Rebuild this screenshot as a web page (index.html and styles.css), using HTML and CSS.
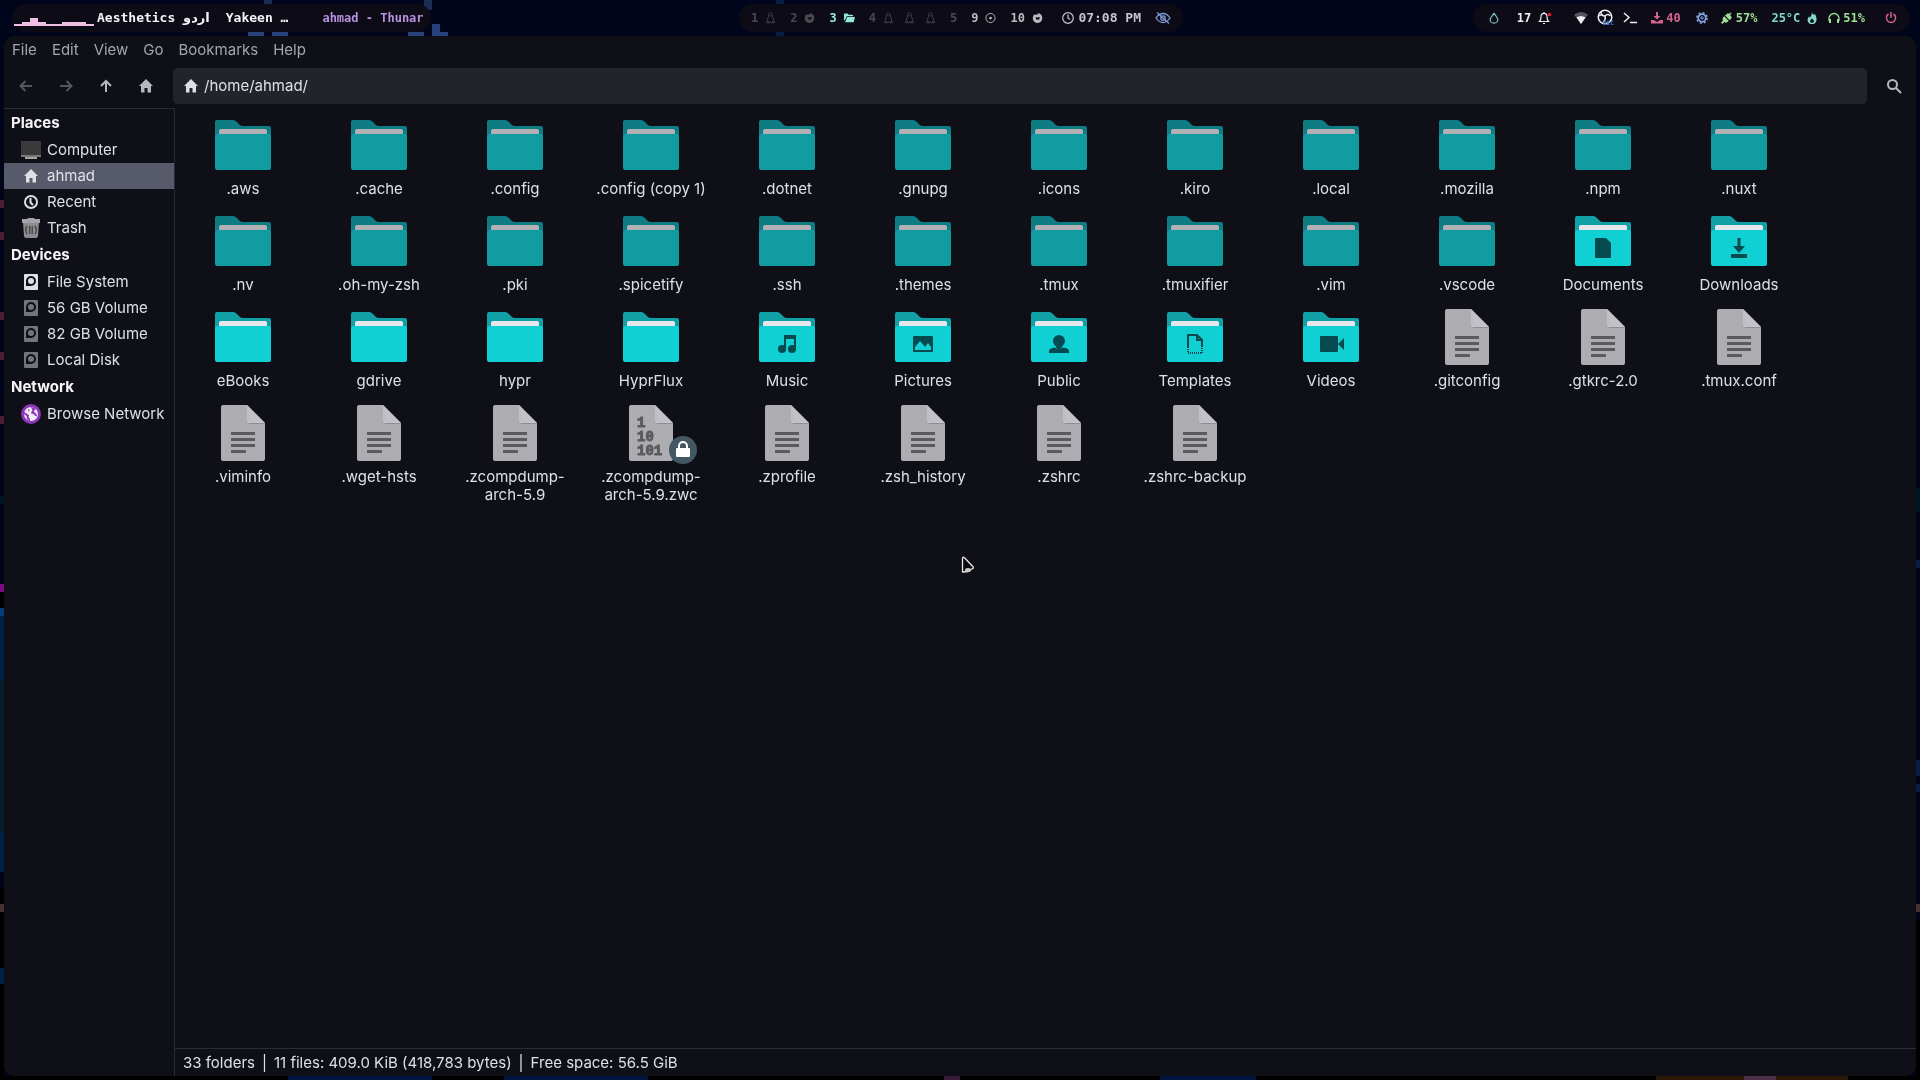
FILE: index.html
```html
<!DOCTYPE html>
<html lang="en">
<head>
  <meta charset="UTF-8">
  <meta name="viewport" content="width=device-width, initial-scale=1.0">
  <title>ahmad - Thunar</title>
  <link rel="stylesheet" href="styles.css">
</head>
<body>
  <!-- Shared icons -->
  <svg class="sprite" aria-hidden="true">
    <symbol id="folder" viewBox="0 0 64 64">
      <path fill="#10a0a5" d="M6 7h16q2 0 4 2l3 3q1 1 3 1h26q2 0 2 2v20H4V9q0-2 2-2z"/>
      <path fill="#e6e7ea" d="M10 16h44q2 0 2 2v8H8v-8q0-2 2-2z"/>
      <rect x="4" y="21" width="56" height="36" rx="2" fill="#10d0d3"/>
    </symbol>
    <symbol id="folder-dim" viewBox="0 0 64 64">
      <path fill="#0e7c82" d="M6 7h16q2 0 4 2l3 3q1 1 3 1h26q2 0 2 2v20H4V9q0-2 2-2z"/>
      <path fill="#b0b0b4" d="M10 16h44q2 0 2 2v8H8v-8q0-2 2-2z"/>
      <rect x="4" y="21" width="56" height="36" rx="2" fill="#119ca1"/>
    </symbol>
    <symbol id="page" viewBox="0 0 64 64">
      <path fill="#adadb1" d="M12 4h24l18 18v36q0 2-2 2H12q-2 0-2-2V6q0-2 2-2z"/>
      <path fill="#8f8f94" d="M38 22h16v1H38z"/>
      <path fill="#c1c1c7" d="M36 4l18 18H38q-2 0-2-2z"/>
    </symbol>
    <symbol id="file" viewBox="0 0 64 64">
      <use href="#page"/>
      <path fill="#5b5b5d" d="M20 31h24v3H20zM20 37h24v3H20zM20 43h24v3H20zM20 49h15v3H20z"/>
    </symbol>
    <symbol id="home" viewBox="0 0 16 16">
      <path d="M8 1l7 7h-2v6.5H9.5V10h-3v4.500H3V8H1z"/>
    </symbol>
    <symbol id="disk" viewBox="0 0 20 20">
      <path fill-rule="evenodd" d="M4 2h12q1 0 1 1v14q0 1-1 1H4q-1 0-1-1V3q0-1 1-1zM10 4a5 5 0 0 0-5 5v5h5a5 5 0 0 0 0-10z"/>
      <circle cx="10" cy="9" r="3"/>
    </symbol>
    <symbol id="tux" viewBox="0 0 12 14">
      <path fill="none" stroke="currentColor" d="M6 1c-1.500 0-2 1-2 2.500C4 5.500 2.500 7 2.500 10M6 1c1.500 0 2 1 2 2.500 0 2 1.500 3.500 1.500 6.500M1 12l1.500-2L5 12.500H1.500zM11 12l-1.500-2L7 12.500h3.500zM5 12h2M5 4.500h2"/>
    </symbol>
    <symbol id="firefox" viewBox="0 0 12 12">
      <path fill-rule="evenodd" d="M2.500 2l1 .8Q5 1.800 7 2L6 .8Q11 1 11.200 6A5.200 5.200 0 0 1 .8 6.500Q.8 3.500 2.500 2zM4.200 4.500Q3.500 7.500 6.200 8 8.500 8 8.600 5.800 8 4.800 6.800 4.900 6.200 6 5.200 5.500z"/>
    </symbol>
  </svg>

  <!-- Wallpaper visible around the window -->
  <svg class="wallpaper" viewBox="0 0 1920 1080" preserveAspectRatio="none" aria-hidden="true">
    <path fill="#1b2d55" d="M264 0h8v4h-8zM424 0h8v10h-8z"/>
    <path fill="#25437a" d="M248 32h16v4h-16zM272 32h16v4h-16zM408 32h16v4h-16zM432 24h8v8h8v4h-16z"/>
    <path fill="#071f48" d="M776 0h8v36h-8zM1916 560h4v8h-4zM1916 760h4v16h-4zM1916 784h4v8h-4z"/>
    <path fill="#4a1e2e" d="M0 200h4v8H0zM0 232h4v8H0zM0 312h4v8H0zM0 352h4v8H0zM0 416h4v8H0z"/>
    <path fill="#001528" d="M0 496h4v8H0zM1916 488h4v24h-4z"/>
    <path fill="#7a0a80" d="M0 584h4v8H0z"/>
    <path fill="#000" d="M0 592h4v16H0zM0 888h4v192H0zM1916 920h4v160h-4zM0 1076h1920v4H0z"/>
    <path fill="#063a78" d="M0 608h4v8H0z"/>
    <path fill="#002048" d="M0 616h4v64H0zM0 832h4v40H0zM0 968h4v16H0z"/>
    <path fill="#0a1c30" d="M0 680h4v152H0z"/>
    <path fill="#463030" d="M0 904h4v8H0zM1916 904h4v8h-4z"/>
    <path fill="#001540" d="M288 1076h144v4H288zM504 1076h144v4H504zM1160 1076h96v4h-96z"/>
    <path fill="#3a1a38" d="M944 1076h16v4h-16z"/>
    <path fill="#2a1805" d="M1656 1076h192v4h-192z"/>
    <path fill="#4a3048" d="M1744 1076h32v4h-32z"/>
  </svg>

  <div class="desktop">
    <header class="bar">
      <div class="pill pill-left">
        <svg class="cava" viewBox="0 0 80 28"><path fill="#f0bfe4" d="M0 20h8v-2h8v-4h8v4h8v2h16v-2h24v2h8v2H0z"/></svg>
        <span class="song">Aesthetics <span class="urdu" lang="ur">اردو</span></span>
        <span class="song artist">Yakeen …</span>
        <span class="window-title">ahmad - Thunar</span>
      </div>

      <nav class="pill pill-center" aria-label="Workspaces">
        <div class="workspaces">
          <button class="ws">1 <svg><use href="#tux"/></svg></button>
          <button class="ws">2 <svg><use href="#firefox"/></svg></button>
          <button class="ws active">3 <svg viewBox="0 0 12 12"><path d="M0 2q0-1 1-1h3l1 1.500h4q1 0 1 1V4H3L1 8.500H0zM3.500 5H12l-1.500 5.500H1.200z"/></svg></button>
          <button class="ws">4 <svg><use href="#tux"/></svg><svg><use href="#tux"/></svg><svg><use href="#tux"/></svg></button>
          <button class="ws">5</button>
          <button class="ws used">9 <svg viewBox="0 0 12 12"><circle cx="6" cy="6" r="5" fill="none" stroke="currentColor"/><circle cx="6" cy="6" r="1.500"/></svg></button>
          <button class="ws used">10 <svg><use href="#firefox"/></svg></button>
        </div>
        <span class="clock">
          <svg viewBox="0 0 12 12" fill="none" stroke="currentColor" stroke-width="1.200"><circle cx="6" cy="6" r="5.300"/><path d="M6 2.500V6l2 1.500"/></svg>
          07:08 PM
        </span>
        <button class="eye" aria-label="Idle inhibitor">
          <svg viewBox="0 0 16 12" fill="none" stroke="currentColor" stroke-width="1.300"><path d="M1 6q3-4.500 7-4.500T15 6q-3 4.500-7 4.500T1 6z"/><circle cx="8" cy="6" r="2.200"/><path d="M2 .5l12 11"/></svg>
        </button>
      </nav>

      <div class="pill pill-right">
        <svg class="mod teal" viewBox="0 0 12 14" fill="none" stroke="currentColor" stroke-width="1.300"><path d="M6 1.500Q1.500 7 1.500 9a4.500 4 0 0 0 9 0Q10.500 7 6 1.500z"/></svg>
        <span class="mod updates">17
          <svg viewBox="0 0 14 14"><path fill="none" stroke="currentColor" stroke-width="1.200" d="M1.500 10.500q1.500-1.500 1.500-5A3 3 0 0 1 6 2.300a3 3 0 0 1 3 3.200q0 3.500 1.500 5zM5 12.500h2M6 1v1"/><circle cx="11.500" cy="3.500" r="1.800" fill="#f01c2c"/></svg>
        </span>
        <svg class="mod wifi" viewBox="0 0 16 14"><path fill="#54545c" d="M1 3.500q7-5 14 0L8 13z"/><path d="M3.500 6.500q4.500-3 9 0L8 13z"/></svg>
        <svg class="mod rec" viewBox="0 0 18 18">
          <circle cx="8" cy="8" r="6.800" fill="none" stroke="currentColor" stroke-width="1.500"/>
          <path fill="none" stroke="currentColor" stroke-width="1.500" d="M4 3q0 4 4 4 3-3 5.500 0M8 7q1 4-2 6M2 7q2-2 4-1"/>
          <text x="6" y="16">REC</text>
        </svg>
        <svg class="mod terminal" viewBox="0 0 14 12" fill="none" stroke="currentColor" stroke-width="1.500"><path d="M1 1l5 4.500L1 10M7 10.500h7"/></svg>
        <span class="mod pink download"><svg viewBox="0 0 12 12"><path d="M5 0h2v4h2.500L6 7.500 2.500 4H5zM0 8h3l3 2 3-2h3v3.500H0z"/></svg>40</span>
        <svg class="mod blue gear" viewBox="0 0 12 12" fill="none" stroke="currentColor"><circle cx="6" cy="6" r="3.800" stroke-width="1.800"/><circle cx="6" cy="6" r="5.200" stroke-width="1.500" stroke-dasharray="2 2.080"/><circle cx="6" cy="6" r="1.200"/></svg>
        <span class="mod green battery"><svg viewBox="0 0 12 12"><path d="M6 2l1-1 1 1L9.500.5l1 1L9 3l1 1q1.500 1.500 0 3L8.500 8 4 3.500 5 2.500zM3.200 4.300l4.500 4.500L6.500 10Q5 11 3.500 10L1.200 12 0 10.800 2 8.500Q1 7 2 5.500z"/></svg>57%</span>
        <span class="mod teal temp">25°C<svg viewBox="0 0 12 12"><path fill-rule="evenodd" d="M6 0q0 2 2 3l.7-1.200Q11 5 10.500 8A4.500 4.200 0 0 1 1.500 8Q1.500 6 3.300 4.300L4 6Q6 3 6 0zM6 6.500Q4 8 4 9.200a2 1.600 0 0 0 4 0Q8 8 6 6.500z"/></svg></span>
        <span class="mod green volume"><svg viewBox="0 0 12 12" fill="none" stroke="currentColor"><path stroke-width="1.300" d="M1 9V6.500a5 5 0 0 1 10 0V9"/><path stroke-width="2" d="M2 7v4M10 7v4"/></svg>51%</span>
        <button class="mod pink power" aria-label="Power"><svg viewBox="0 0 12 12" fill="none" stroke="currentColor" stroke-width="1.500"><path d="M3.500 2a4.600 4.600 0 1 0 5 0M6 0v6"/></svg></button>
      </div>
    </header>

    <div class="window">
      <nav class="menubar" aria-label="Menu">
        <button>File</button>
        <button>Edit</button>
        <button>View</button>
        <button>Go</button>
        <button>Bookmarks</button>
        <button>Help</button>
      </nav>

      <div class="toolbar">
        <div class="nav-buttons">
          <button disabled aria-label="Back"><svg viewBox="0 0 16 16"><path class="line" d="M14 8H3M7.500 3L2.500 8l5 5"/></svg></button>
          <button disabled aria-label="Forward"><svg viewBox="0 0 16 16"><path class="line" d="M2 8h11M8.500 3l5 5-5 5"/></svg></button>
          <button aria-label="Up"><svg viewBox="0 0 16 16"><path class="line" d="M8 14V3M3 8l5-5 5 5"/></svg></button>
          <button aria-label="Home"><svg><use href="#home"/></svg></button>
        </div>
        <label class="pathbar">
          <svg><use href="#home"/></svg>
          <input type="text" value="/home/ahmad/" aria-label="Location">
        </label>
        <button class="search" aria-label="Search"><svg viewBox="0 0 16 16"><path class="line" d="M10 10l5 5"/><circle class="line" cx="6.500" cy="6.500" r="4.500"/></svg></button>
      </div>

      <div class="content">
        <aside class="sidebar">
          <h2>Places</h2>
          <a href="#"><svg viewBox="0 0 20 20"><path fill="#3a3a3c" d="M0 1h20v14H0z"/><path fill="#77777a" d="M0 15h20v2H0z"/><path fill="#a5a5a8" d="M4 17h12v2H4z"/></svg>Computer</a>
          <a href="#" class="selected"><svg viewBox="-2 -2 20 20"><use href="#home" width="16" height="16"/></svg>ahmad</a>
          <a href="#"><svg viewBox="0 0 20 20" fill="none" stroke="currentColor" stroke-width="2"><circle cx="10" cy="10" r="6"/><path d="M9.500 6v4.500L12 13"/></svg>Recent</a>
          <a href="#"><svg viewBox="0 0 20 20"><path fill="#8c8c8f" d="M2 4h16l-1 14q-.3 2-2 2H5q-1.700 0-2-2z"/><path fill="#a4a4a8" d="M1 1h5l1-1h6l1 1h5v4H1z"/><path fill="none" stroke="#4a4a4e" stroke-width="1.500" d="M6 8q-2.500 4 0 8M8.700 8v8M11.300 8v8M14 8q2.500 4 0 8"/></svg>Trash</a>
          <h2>Devices</h2>
          <a href="#"><svg><use href="#disk"/></svg>File System</a>
          <a href="#" class="unmounted"><svg><use href="#disk"/></svg>56 GB Volume</a>
          <a href="#" class="unmounted"><svg><use href="#disk"/></svg>82 GB Volume</a>
          <a href="#" class="unmounted"><svg><use href="#disk"/></svg>Local Disk</a>
          <h2>Network</h2>
          <a href="#"><svg viewBox="0 0 20 20"><circle cx="10" cy="10" r="10" fill="#8b35b8"/><circle cx="10" cy="10" r="7" fill="#f4eef8"/><path fill="#8b35b8" d="M3 8l2.500 1.500L8 11l-.5 2 1.500 2v2.500L6 15l-.5-3L3 10zM9.500 3l3 .5L15 5l-1.500 1-.5 2 2 1.500 1.500 3-2-.5-2-2-2.500-.5.5-2 1-1.500zM7 5l2 1-1.500 1.500z"/></svg>Browse Network</a>
        </aside>

        <div class="main">
          <div class="files">
            <a class="item" href="#"><svg><use href="#folder-dim"/></svg><span>.aws</span></a>
            <a class="item" href="#"><svg><use href="#folder-dim"/></svg><span>.cache</span></a>
            <a class="item" href="#"><svg><use href="#folder-dim"/></svg><span>.config</span></a>
            <a class="item" href="#"><svg><use href="#folder-dim"/></svg><span>.config (copy 1)</span></a>
            <a class="item" href="#"><svg><use href="#folder-dim"/></svg><span>.dotnet</span></a>
            <a class="item" href="#"><svg><use href="#folder-dim"/></svg><span>.gnupg</span></a>
            <a class="item" href="#"><svg><use href="#folder-dim"/></svg><span>.icons</span></a>
            <a class="item" href="#"><svg><use href="#folder-dim"/></svg><span>.kiro</span></a>
            <a class="item" href="#"><svg><use href="#folder-dim"/></svg><span>.local</span></a>
            <a class="item" href="#"><svg><use href="#folder-dim"/></svg><span>.mozilla</span></a>
            <a class="item" href="#"><svg><use href="#folder-dim"/></svg><span>.npm</span></a>
            <a class="item" href="#"><svg><use href="#folder-dim"/></svg><span>.nuxt</span></a>
            <a class="item" href="#"><svg><use href="#folder-dim"/></svg><span>.nv</span></a>
            <a class="item" href="#"><svg><use href="#folder-dim"/></svg><span>.oh-my-zsh</span></a>
            <a class="item" href="#"><svg><use href="#folder-dim"/></svg><span>.pki</span></a>
            <a class="item" href="#"><svg><use href="#folder-dim"/></svg><span>.spicetify</span></a>
            <a class="item" href="#"><svg><use href="#folder-dim"/></svg><span>.ssh</span></a>
            <a class="item" href="#"><svg><use href="#folder-dim"/></svg><span>.themes</span></a>
            <a class="item" href="#"><svg><use href="#folder-dim"/></svg><span>.tmux</span></a>
            <a class="item" href="#"><svg><use href="#folder-dim"/></svg><span>.tmuxifier</span></a>
            <a class="item" href="#"><svg><use href="#folder-dim"/></svg><span>.vim</span></a>
            <a class="item" href="#"><svg><use href="#folder-dim"/></svg><span>.vscode</span></a>
            <a class="item" href="#"><svg viewBox="0 0 64 64"><use href="#folder"/><path class="emblem" d="M25 29h10l5 5v14q0 1-1 1H25q-1 0-1-1V30q0-1 1-1z"/></svg><span>Documents</span></a>
            <a class="item" href="#"><svg viewBox="0 0 64 64"><use href="#folder"/><path class="emblem" d="M30.500 29h3v8H38l-6 7-6-7h4.500zM24 45h16v4H24z"/></svg><span>Downloads</span></a>
            <a class="item" href="#"><svg><use href="#folder"/></svg><span>eBooks</span></a>
            <a class="item" href="#"><svg><use href="#folder"/></svg><span>gdrive</span></a>
            <a class="item" href="#"><svg><use href="#folder"/></svg><span>hypr</span></a>
            <a class="item" href="#"><svg><use href="#folder"/></svg><span>HyprFlux</span></a>
            <a class="item" href="#"><svg viewBox="0 0 64 64"><use href="#folder"/><path class="emblem" d="M29 30h12v14h-2V34h-8v10h-2z"/><circle class="emblem" cx="27" cy="44" r="4"/><circle class="emblem" cx="37" cy="44" r="4"/></svg><span>Music</span></a>
            <a class="item" href="#"><svg viewBox="0 0 64 64"><use href="#folder"/><path class="emblem" fill-rule="evenodd" d="M23 31h18q1 0 1 1v14q0 1-1 1H23q-1 0-1-1V32q0-1 1-1zM24 45h16v-3l-3-4-3 4-5-6-5 6z"/></svg><span>Pictures</span></a>
            <a class="item" href="#"><svg viewBox="0 0 64 64"><use href="#folder"/><ellipse class="emblem" cx="32" cy="36" rx="6" ry="6"/><path class="emblem" d="M29 40h6v2.500l-3 2-3-2zM22 48v-2q0-3 6-3.500 4 3 8 0 6 .5 6 3.500v2z"/></svg><span>Public</span></a>
            <a class="item" href="#"><svg viewBox="0 0 64 64"><use href="#folder"/><path fill="none" stroke="#044a4e" stroke-width="2" d="M25 42V30h9l5 5v7M34 30v5h5"/><path fill="none" stroke="#044a4e" stroke-width="2" stroke-dasharray="1 1" d="M25 42v6h14v-6"/></svg><span>Templates</span></a>
            <a class="item" href="#"><svg viewBox="0 0 64 64"><use href="#folder"/><path class="emblem" d="M22 31h16q1 0 1 1v14q0 1-1 1H22q-1 0-1-1V32q0-1 1-1zM39 39l6-6v12z"/></svg><span>Videos</span></a>
            <a class="item" href="#"><svg><use href="#file"/></svg><span>.gitconfig</span></a>
            <a class="item" href="#"><svg><use href="#file"/></svg><span>.gtkrc-2.0</span></a>
            <a class="item" href="#"><svg><use href="#file"/></svg><span>.tmux.conf</span></a>
            <a class="item" href="#"><svg><use href="#file"/></svg><span>.viminfo</span></a>
            <a class="item" href="#"><svg><use href="#file"/></svg><span>.wget-hsts</span></a>
            <a class="item" href="#"><svg><use href="#file"/></svg><span>.zcompdump-arch-5.9</span></a>
            <a class="item" href="#">
              <svg viewBox="0 0 64 64">
                <use href="#page"/>
                <g class="binary"><text x="18" y="26">1</text><text x="18" y="40">10</text><text x="18" y="54">101</text></g>
                <circle cx="64" cy="49" r="14" fill="#435862"/>
                <path fill="none" stroke="#fff" stroke-width="2" d="M60 48v-3a4 4 0 0 1 8 0v3"/>
                <rect x="57" y="47" width="14" height="9" rx="1" fill="#fff"/>
              </svg>
              <span>.zcompdump-arch-5.9.zwc</span>
            </a>
            <a class="item" href="#"><svg><use href="#file"/></svg><span>.zprofile</span></a>
            <a class="item" href="#"><svg><use href="#file"/></svg><span>.zsh_history</span></a>
            <a class="item" href="#"><svg><use href="#file"/></svg><span>.zshrc</span></a>
            <a class="item" href="#"><svg><use href="#file"/></svg><span>.zshrc-backup</span></a>
          </div>
          <footer class="statusbar">
            <span>33 folders</span><span>|</span><span>11 files: 409.0 KiB (418,783 bytes)</span><span>|</span><span>Free space: 56.5 GiB</span>
          </footer>
        </div>
      </div>
    </div>
  </div>

  <svg class="cursor" viewBox="0 0 14 18" aria-hidden="true">
    <path fill="#0c0c0c" stroke="#eee3e6" stroke-width="1.300" stroke-linejoin="round" d="M1.500 2.500q.3-2 2-.8l8.500 9q1 1.500-.8 2L7 15.500l-5.500.5z"/>
    <ellipse cx="7" cy="14" rx="3" ry="2" fill="#c9cbc4"/>
  </svg>
</body>
</html>
```
FILE: styles.css
```css
* {
  box-sizing: border-box;
}

body {
  margin: 0;
  background-color: #01051c;
  color: #dfe0e6;
  font-family: Inter, "Noto Sans", sans-serif;
  font-size: 15px;
  line-height: 18px;
}

button {
  padding: 0;
  border: none;
  background: none;
  color: inherit;
  font: inherit;
}

a {
  color: inherit;
  text-decoration: none;
}

svg {
  flex: none;
  fill: currentColor;
}

svg[fill="none"] {
  fill: none;
}

.sprite {
  position: absolute;
  width: 0;
  height: 0;
}

.wallpaper {
  position: fixed;
  inset: 0;
  width: 100%;
  height: 100%;
  z-index: -1;
}

.desktop {
  display: flex;
  flex-direction: column;
  height: 100vh;
  padding: 4px;
}

/* Status bar on top */
.bar {
  display: grid;
  grid-template-columns: 1fr auto 1fr;
  margin-bottom: 4px;
  padding: 0 6px 0 8px;
  font-family: "DejaVu Sans Mono", monospace;
  font-size: 12px;
  font-weight: bold;
}

.pill {
  display: flex;
  align-items: center;
  height: 28px;
  border-radius: 14px;
  background-color: #0d0b15;
  white-space: nowrap;
}

.pill-left {
  justify-self: start;
  padding: 0 7px 0 2px;
}

.cava {
  width: 80px;
  height: 28px;
}

.song {
  margin-left: 3px;
  color: #f3f3f6;
  font-size: 13px;
}

.urdu {
  font-family: "DejaVu Sans", sans-serif;
}

.artist {
  margin-left: 16px;
}

.window-title {
  margin-left: 34px;
  color: #b892e0;
}

.pill-center {
  width: 444px;
  padding: 0 12px;
}

.workspaces {
  display: flex;
  gap: 14px;
}

.ws {
  display: flex;
  align-items: center;
  gap: 7px;
  color: #4b4a52;
}

.ws svg {
  width: 11px;
  height: 12px;
}

.ws svg + svg {
  margin-left: 3px;
}

.ws.active {
  color: #94e8d6;
}

.ws.used {
  color: #b9b9bf;
}

.clock {
  display: flex;
  align-items: center;
  gap: 4px;
  margin-left: auto;
  color: #c3c6d2;
  font-size: 13px;
}

.clock svg {
  width: 12px;
  height: 12px;
}

.eye {
  display: flex;
  margin-left: 14px;
  color: #7f9bd8;
}

.eye svg {
  width: 16px;
  height: 12px;
}

.pill-right {
  justify-self: end;
  padding: 0 13px 0 15px;
}

.mod {
  display: flex;
  align-items: center;
  gap: 3px;
  height: 14px;
  color: #eeeef2;
}

.mod svg {
  width: 12px;
  height: 12px;
}

svg.mod {
  width: 12px;
  height: 12px;
}

.mod.teal {
  color: #82d8cb;
}

.mod.pink {
  color: #d2638f;
}

.mod.blue {
  color: #85a4e4;
}

.mod.green {
  color: #9ede94;
}

.updates {
  gap: 7px;
  margin-left: 17px;
}

.updates svg {
  width: 14px;
  height: 14px;
}

svg.wifi {
  width: 16px;
  height: 14px;
  margin-left: 21px;
}

svg.rec {
  width: 18px;
  height: 18px;
  margin-left: 8px;
}

.rec text {
  fill: #3f7ad8;
  font-size: 6px;
}

svg.terminal {
  width: 14px;
  margin-left: 8px;
}

.download {
  margin-left: 14px;
}

svg.gear {
  margin-left: 15px;
}

.battery {
  margin-left: 13px;
}

.temp {
  gap: 6px;
  margin-left: 14px;
}

.volume {
  margin-left: 10px;
}

.power {
  margin-left: 20px;
}

/* File manager window */
.window {
  display: flex;
  flex: 1;
  flex-direction: column;
  min-height: 0;
  border-radius: 10px;
  background-color: #0f0f18;
  overflow: hidden;
}

.menubar {
  display: flex;
  gap: 15px;
  height: 28px;
  padding: 0 8px;
  color: #a5a6ac;
}

.toolbar {
  display: flex;
  align-items: center;
  height: 44px;
  padding: 0 2px;
  gap: 7px;
}

.nav-buttons {
  display: flex;
}

.toolbar button {
  display: flex;
  align-items: center;
  justify-content: center;
  width: 40px;
  height: 36px;
  color: #b6b7c0;
}

.toolbar button:disabled {
  color: #55565e;
}

.toolbar svg {
  width: 16px;
  height: 16px;
}

.line {
  fill: none;
  stroke: currentColor;
  stroke-width: 2;
}

.pathbar {
  display: flex;
  flex: 1;
  align-items: center;
  gap: 5px;
  height: 36px;
  padding: 0 10px;
  border-radius: 5px;
  background-color: #22242c;
}

.pathbar input {
  flex: 1;
  padding: 0;
  border: none;
  outline: none;
  background: none;
  color: inherit;
  font: inherit;
}

.content {
  display: flex;
  flex: 1;
  min-height: 0;
}

.sidebar {
  width: 171px;
  border-top: 1px solid #2a2b33;
  border-right: 1px solid #2a2b33;
}

.sidebar h2 {
  margin: 0;
  padding: 5px 7px;
  color: #f6f6f8;
  font-size: 15px;
  font-weight: bold;
}

.sidebar a {
  display: flex;
  align-items: center;
  gap: 6px;
  height: 26px;
  padding-left: 17px;
  white-space: nowrap;
}

.sidebar a.selected {
  background-color: #565a6b;
}

.sidebar svg {
  width: 20px;
  height: 20px;
}

.sidebar .unmounted svg {
  color: #74757c;
}

.main {
  display: flex;
  flex: 1;
  flex-direction: column;
  min-width: 0;
}

.files {
  display: grid;
  flex: 1;
  grid-template-columns: repeat(auto-fill, 136px);
  grid-auto-rows: minmax(96px, auto);
  align-content: start;
  padding-top: 5px;
  overflow: hidden;
}

.item {
  display: flex;
  flex-direction: column;
  align-items: center;
  gap: 3px;
  padding: 0 12px;
  text-align: center;
}

.item svg {
  width: 64px;
  height: 64px;
  overflow: visible;
}

.emblem {
  fill: #044a4e;
}

.binary {
  fill: #5b5b5d;
  stroke: #5b5b5d;
  font-family: "Liberation Mono", monospace;
  font-size: 14px;
  font-weight: bold;
  line-height: 14px;
}

.statusbar {
  display: flex;
  gap: 7px;
  padding: 5px 8px 4px;
  border-top: 1px solid #2a2b33;
}

/* Mouse pointer */
.cursor {
  position: fixed;
  top: 556px;
  left: 961px;
  width: 14px;
  height: 18px;
}
```
